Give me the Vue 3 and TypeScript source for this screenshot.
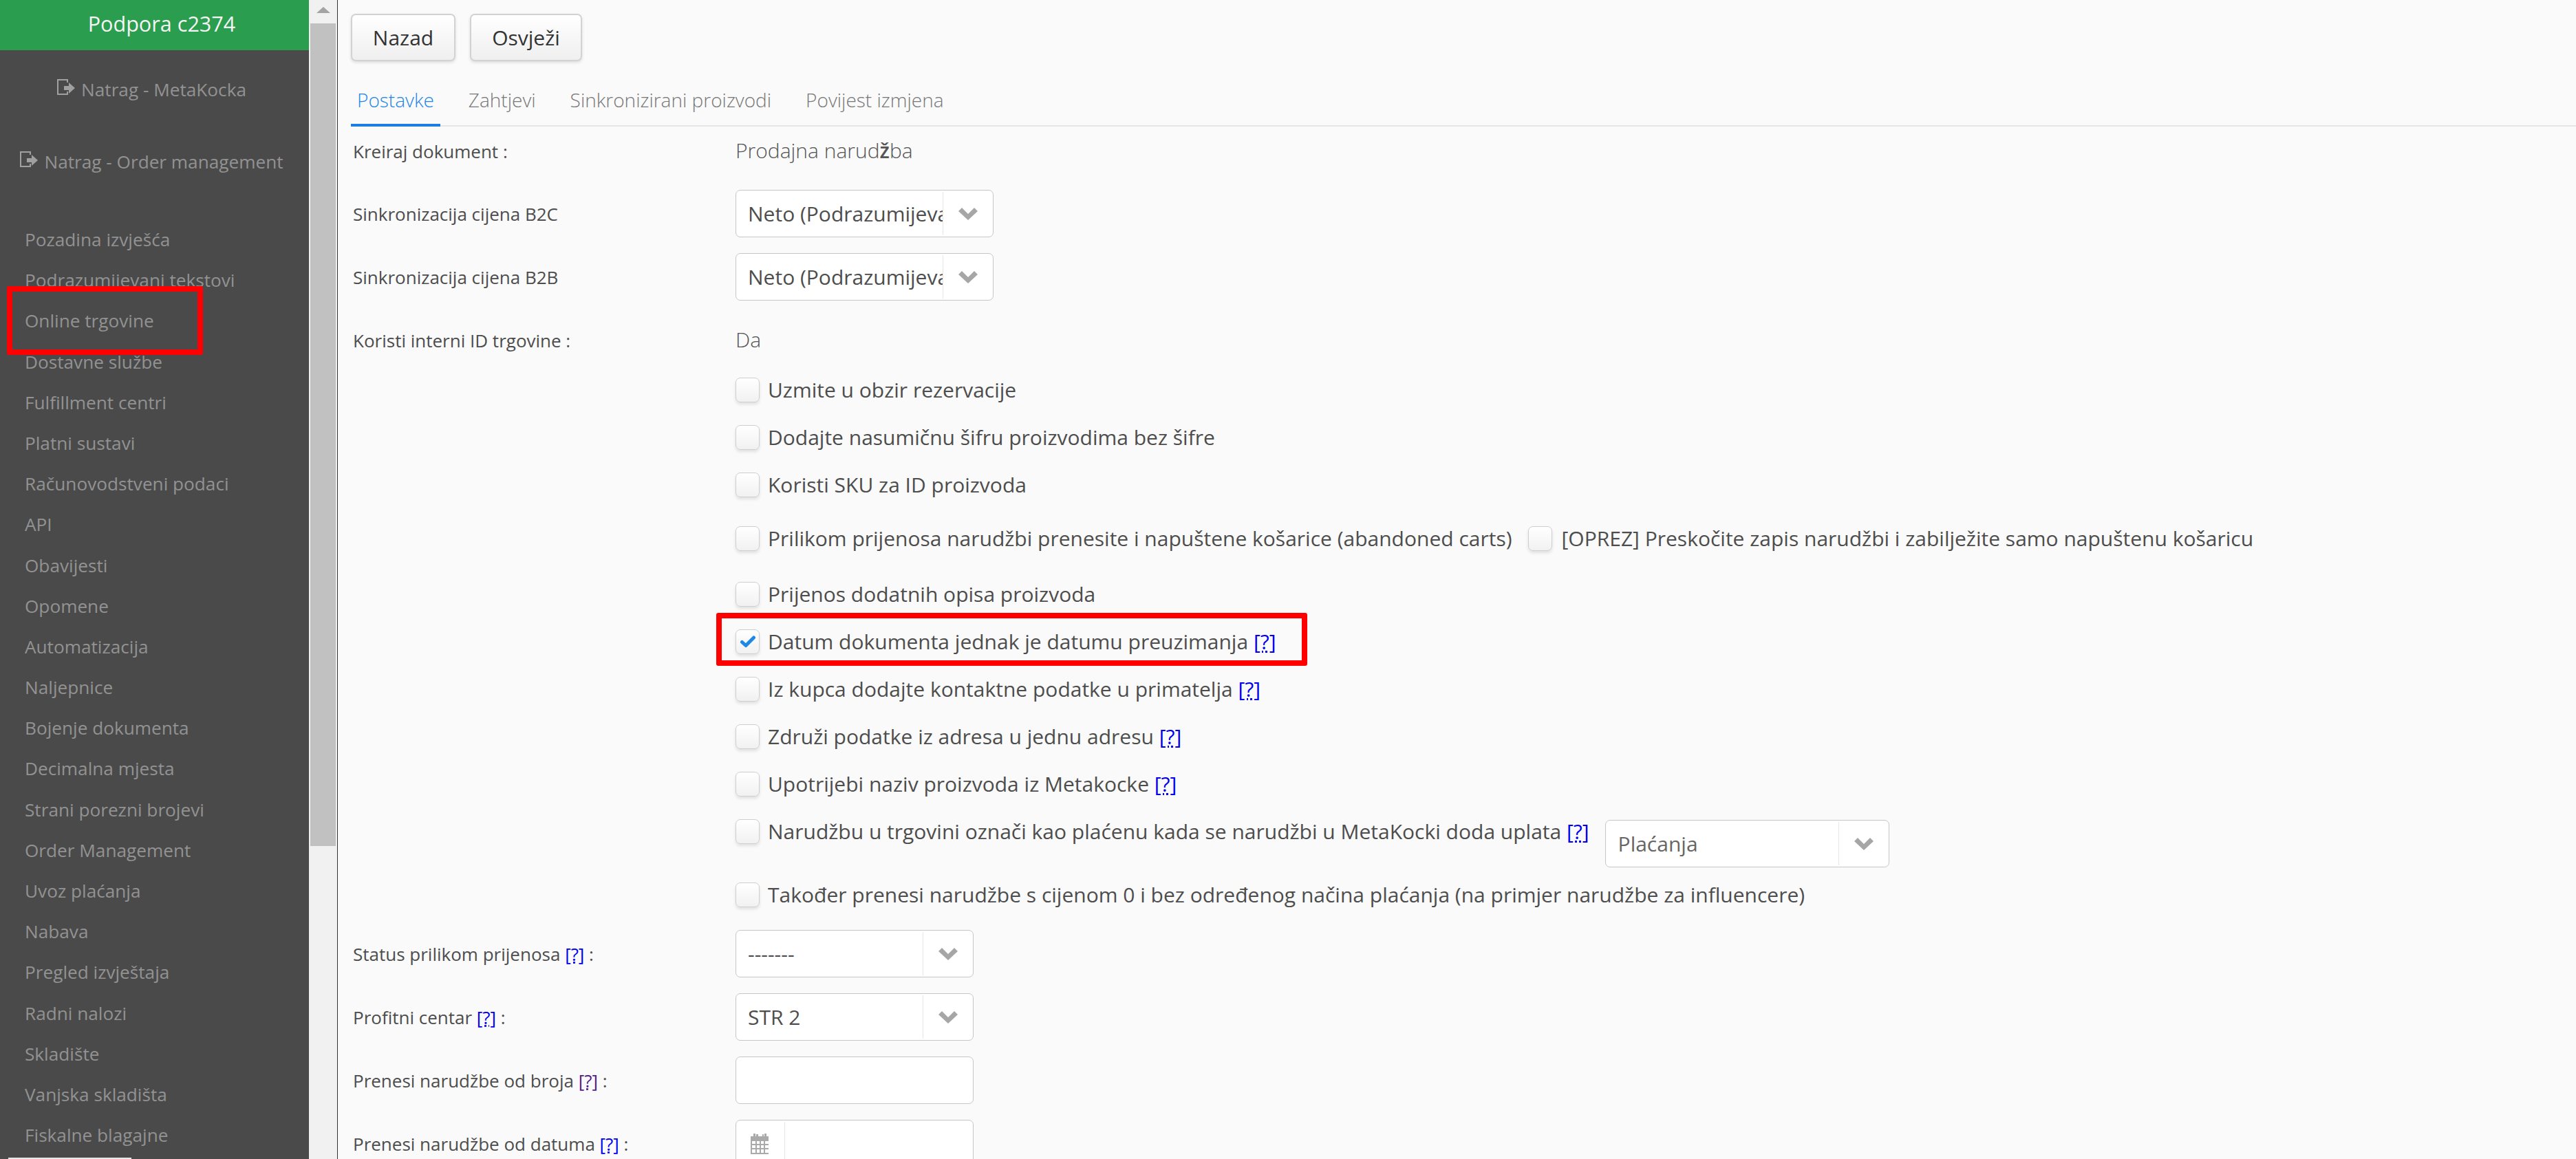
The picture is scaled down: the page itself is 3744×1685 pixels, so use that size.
<script setup lang="ts">
const menu: string[] = ['Pozadina izvješća','Podrazumijevani tekstovi','Online trgovine','Dostavne službe','Fulfillment centri','Platni sustavi','Računovodstveni podaci','API','Obavijesti','Opomene','Automatizacija','Naljepnice','Bojenje dokumenta','Decimalna mjesta','Strani porezni brojevi','Order Management','Uvoz plaćanja','Nabava','Pregled izvještaja','Radni nalozi','Skladište','Vanjska skladišta','Fiskalne blagajne']
const tabs: string[] = ['Postavke','Zahtjevi','Sinkronizirani proizvodi','Povijest izmjena']
const plainTop: string[] = ['Uzmite u obzir rezervacije','Dodajte nasumičnu šifru proizvodima bez šifre','Koristi SKU za ID proizvoda']
const helpRows: { text: string; checked: boolean }[] = [
  { text: 'Datum dokumenta jednak je datumu preuzimanja', checked: true },
  { text: 'Iz kupca dodajte kontaktne podatke u primatelja', checked: false },
  { text: 'Združi podatke iz adresa u jednu adresu', checked: false },
  { text: 'Upotrijebi naziv proizvoda iz Metakocke', checked: false },
]
</script>

<template>
  <div class="page">
    <aside class="sidebar">
      <div class="brand">Podpora c2374</div>
      <a class="back first">
        <svg class="logout" viewBox="0 0 27 24"><path d="M15 5V1H1v21h14v-4" fill="none" stroke="currentColor" stroke-width="2"/><path d="M10 10h7V5l9 8-9 8v-5h-7z" fill="currentColor"/></svg>
        <span>Natrag - MetaKocka</span>
      </a>
      <a class="back second">
        <svg class="logout" viewBox="0 0 27 24"><path d="M15 5V1H1v21h14v-4" fill="none" stroke="currentColor" stroke-width="2"/><path d="M10 10h7V5l9 8-9 8v-5h-7z" fill="currentColor"/></svg>
        <span>Natrag - Order management</span>
      </a>
      <nav class="menu">
        <a v-for="m in menu" :key="m" class="menu-item">{{ m }}</a>
      </nav>
      <div class="mark mark-side"></div>
      <div class="side-thumb"></div>
    </aside>

    <div class="scrollbar">
      <div class="arrow-up"></div>
      <div class="thumb"></div>
    </div>

    <main class="content">
      <div class="actions">
        <button class="btn">Nazad</button>
        <button class="btn btn-wide">Osvježi</button>
      </div>
      <div class="tabs">
        <a v-for="(t, i) in tabs" :key="t" class="tab" :class="{ active: i === 0 }">{{ t }}</a>
      </div>

      <div class="form">
        <div class="row first-row">
          <label class="label">Kreiraj dokument :</label>
          <span class="value">Prodajna narud<b>ž</b>ba</span>
        </div>
        <div class="row">
          <label class="label">Sinkronizacija cijena B2C</label>
          <div class="select sel-a"><span class="sel-text">Neto (Podrazumijevana)</span><span class="sel-btn"><svg class="chev" viewBox="0 0 28 18"><path d="M0 5 5 0 14 9 23 0 28 5 14 18z"/></svg></span></div>
        </div>
        <div class="row">
          <label class="label">Sinkronizacija cijena B2B</label>
          <div class="select sel-a"><span class="sel-text">Neto (Podrazumijevana)</span><span class="sel-btn"><svg class="chev" viewBox="0 0 28 18"><path d="M0 5 5 0 14 9 23 0 28 5 14 18z"/></svg></span></div>
        </div>
        <div class="row short">
          <label class="label">Koristi interni ID trgovine :</label>
          <span class="value">Da</span>
        </div>

        <div class="checks">
          <div v-for="p in plainTop" :key="p" class="check-row">
            <span class="cb"></span><span class="cb-text">{{ p }}</span>
          </div>
          <div class="check-row double">
            <span class="cb"></span><span class="cb-text">Prilikom prijenosa narudžbi prenesite i napuštene košarice (abandoned carts)</span>
            <span class="cb cb-second"></span><span class="cb-text cb-text-second">[OPREZ] Preskočite zapis narudžbi i zabilježite samo napuštenu košaricu</span>
          </div>
          <div class="check-row">
            <span class="cb"></span><span class="cb-text">Prijenos dodatnih opisa proizvoda</span>
          </div>
          <div v-for="h in helpRows" :key="h.text" class="check-row">
            <span class="cb">
              <svg v-if="h.checked" class="tick" viewBox="0 0 22 18"><path d="M2.5 9.5 8 14.5 19.5 3" fill="none" stroke="#1e88e5" stroke-width="5" stroke-linejoin="round" stroke-linecap="round"/></svg>
            </span>
            <span class="cb-text">{{ h.text }} <a class="help">[?]</a></span>
          </div>
          <div class="check-row pay-row">
            <span class="cb"></span>
            <span class="cb-text">Narudžbu u trgovini označi kao plaćenu kada se narudžbi u MetaKocki doda uplata <a class="help">[?]</a></span>
            <div class="select sel-pay"><span class="sel-text muted">Plaćanja</span><span class="sel-btn"><svg class="chev" viewBox="0 0 28 18"><path d="M0 5 5 0 14 9 23 0 28 5 14 18z"/></svg></span></div>
          </div>
          <div class="check-row">
            <span class="cb"></span><span class="cb-text">Također prenesi narudžbe s cijenom 0 i bez određenog načina plaćanja (na primjer narudžbe za influencere)</span>
          </div>
        </div>

        <div class="row">
          <label class="label">Status prilikom prijenosa <a class="help">[?]</a> :</label>
          <div class="select sel-b"><span class="sel-text">-------</span><span class="sel-btn"><svg class="chev" viewBox="0 0 28 18"><path d="M0 5 5 0 14 9 23 0 28 5 14 18z"/></svg></span></div>
        </div>
        <div class="row">
          <label class="label">Profitni centar <a class="help">[?]</a> :</label>
          <div class="select sel-b"><span class="sel-text">STR 2</span><span class="sel-btn"><svg class="chev" viewBox="0 0 28 18"><path d="M0 5 5 0 14 9 23 0 28 5 14 18z"/></svg></span></div>
        </div>
        <div class="row">
          <label class="label">Prenesi narudžbe od broja <a class="help visited">[?]</a> :</label>
          <input class="input" type="text" />
        </div>
        <div class="row">
          <label class="label">Prenesi narudžbe od datuma <a class="help">[?]</a> :</label>
          <div class="select sel-b date">
            <span class="date-btn">
              <svg class="cal" viewBox="0 0 28 30">
                <path fill="#aaa" d="M0 4h4V0h3v4h1V1h1v0h2v3h6V1h2v3h1V0h3v4h3v26H0z"/>
                <path fill="#fff" d="M2 11h5v4H2zM9 11h4v4H9zM15 11h4v4h-4zM21 11h5v4h-5zM2 17h5v4H2zM9 17h4v4H9zM15 17h4v4h-4zM21 17h5v4h-5zM2 23h5v5H2zM9 23h4v5H9zM15 23h4v5h-4zM21 23h5v5h-5z"/>
              </svg>
            </span>
          </div>
        </div>
      </div>
      <div class="mark mark-form"></div>
    </main>
  </div>
</template>

<style scoped>
.page {
  display: flex;
  width: 3744px;
  height: 1685px;
  overflow: hidden;
  position: relative;
  font-family: "Open Sans", "Noto Sans", sans-serif;
  background: #fafafa;
  color: #4d4d4d;
}
.sidebar {
  width: 449px;
  flex: none;
  height: 1685px;
  background: #4a4a4a;
  color: #929292;
  position: relative;
  overflow: hidden;
}
.brand {
  height: 73px;
  background: #2a9d4f;
  color: #f4f4f4;
  font-size: 30.6px;
  line-height: 68px;
  text-align: center;
  padding-left: 21px;
  box-sizing: border-box;
}
.back {
  display: flex;
  align-items: center;
  justify-content: center;
  gap: 8px;
  font-size: 26.2px;
  line-height: 36px;
  padding-right: 8px;
}
.back.first { margin-top: 39px; }
.back.second { margin-top: 69px; }
.logout { width: 27px; height: 24px; flex: none; margin-top: -6px; color: #a0a0a0; }
.menu {
  display: flex;
  flex-direction: column;
  margin-top: 66px;
}
.menu-item {
  display: block;
  height: 59.2px;
  line-height: 59px;
  padding-left: 36px;
  font-size: 26.2px;
  white-space: nowrap;
}
.mark {
  position: absolute;
  border: 8px solid #ff0000;
  box-sizing: border-box;
  border-radius: 3px;
}
.mark-side { left: 10px; top: 416px; width: 285px; height: 100px; }
.side-thumb {
  position: absolute;
  left: 12px;
  bottom: 0;
  width: 179px;
  height: 2px;
  background: #e8e8e8;
}
.scrollbar {
  width: 42px;
  flex: none;
  background: #f1f1f1;
  border-right: 1px solid #333;
  box-sizing: border-box;
  position: relative;
  height: 1685px;
  padding: 0 2px;
}
.arrow-up {
  width: 0;
  height: 0;
  margin: 10px auto 15px;
  border-left: 10px solid transparent;
  border-right: 10px solid transparent;
  border-bottom: 9px solid #a3a3a3;
}
.thumb { height: 1196px; background: #c1c1c1; }
.content {
  flex: 1;
  min-width: 0;
  padding-left: 19px;
  box-sizing: border-box;
}
.actions { display: flex; gap: 21px; padding-top: 20px; }
.btn {
  width: 152px;
  height: 69px;
  box-sizing: border-box;
  border: 2px solid #d2d2d2;
  border-radius: 7px;
  background: linear-gradient(#ffffff, #efefef);
  box-shadow: 0 2px 4px rgba(0,0,0,.12);
  font: 30px "Open Sans", sans-serif;
  color: #333;
  padding: 0;
}
.btn-wide { width: 163px; }
.tabs {
  display: flex;
  height: 75px;
  margin-top: 20px;
  box-sizing: border-box;
  border-bottom: 2px solid #e6e6e6;
}
.tab {
  height: 75px;
  box-sizing: border-box;
  padding: 16px 9px 0;
  margin-right: 32px;
  font-size: 28px;
  line-height: 40px;
  font-weight: 300;
  color: #777;
  white-space: nowrap;
}
.tab.active { color: #1f86e6; border-bottom: 4px solid #1a7fe0; }
.form { display: flex; flex-direction: column; }
.row { display: flex; align-items: center; height: 69px; margin-bottom: 23px; }
.first-row { padding-top: 2px; box-sizing: border-box; }
.short { margin-bottom: 20px; }
.label {
  width: 559px;
  flex: none;
  padding-left: 3px;
  box-sizing: border-box;
  font-size: 26px;
  color: #4d4d4d;
  white-space: nowrap;
}
.value { font-size: 30px; font-weight: 300; color: #555; margin-top: -2px; }
.value b { font-weight: 600; }
.checks { display: flex; flex-direction: column; padding-left: 559px; }
.check-row {
  display: flex;
  align-items: flex-start;
  height: 69px;
  font-size: 30px;
  white-space: nowrap;
}
.check-row.double { margin-top: 9px; height: 81px; }
.pay-row { height: 92px; }
.cb {
  width: 35px;
  height: 36px;
  flex: none;
  box-sizing: border-box;
  border: 1px solid #cfcfcf;
  border-radius: 7px;
  background: linear-gradient(#ffffff, #f1f1f1);
  box-shadow: 0 3px 4px rgba(0,0,0,.1);
  display: flex;
  align-items: center;
  justify-content: center;
}
.cb-second { margin-left: 23px; }
.tick { width: 22px; height: 18px; }
.cb-text { margin-left: 12px; line-height: 36px; color: #4d4d4d; }
.cb-text-second { margin-left: 14px; }
.help { color: #0000ee; text-decoration: underline; text-decoration-style: dotted; }
.help.visited { color: #551a8b; }
.select {
  display: flex;
  align-items: stretch;
  height: 69px;
  box-sizing: border-box;
  border: 1px solid #c6c6c6;
  border-radius: 7px;
  background: #fff;
  overflow: hidden;
  font-size: 30px;
}
.sel-a { width: 375px; }
.sel-b { width: 346px; }
.sel-pay { width: 413px; margin: 1px 0 0 23px; }
.sel-text {
  flex: 1;
  min-width: 0;
  padding-left: 17px;
  line-height: 67px;
  overflow: hidden;
  white-space: nowrap;
  color: #4d4d4d;
}
.sel-text.muted { color: #666; padding-left: 18px; }
.sel-btn {
  width: 72px;
  flex: none;
  margin: 2px 0;
  border-left: 1px solid #e6e6e6;
  display: flex;
  align-items: center;
  justify-content: center;
}
.chev { width: 28px; height: 18px; fill: #a6a6a6; }
.input {
  width: 346px;
  height: 69px;
  box-sizing: border-box;
  border: 1px solid #c6c6c6;
  border-radius: 7px;
  background: #fff;
  padding: 0;
}
.date-btn {
  width: 70px;
  flex: none;
  margin: 2px 0;
  border-right: 1px solid #e6e6e6;
  display: flex;
  align-items: center;
  justify-content: center;
}
.cal { width: 28px; height: 30px; }
.mark-form { left: 1041px; top: 891px; width: 859px; height: 77px; }
</style>

<style>
html, body { margin: 0; padding: 0; background: #fafafa; }
</style>
